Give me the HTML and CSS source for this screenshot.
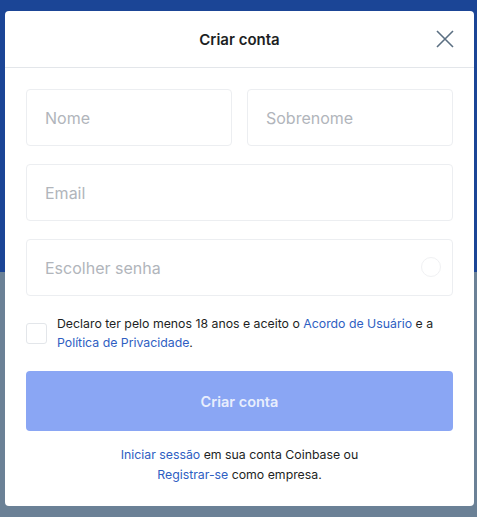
FILE: index.html
```html
<!DOCTYPE html>
<html lang="pt-BR">
<head>
    <meta charset="UTF-8">
    <meta name="viewport" content="width=device-width, initial-scale=1.0">
    <title>Criar conta</title>
    <link rel="stylesheet" href="styles.css">
</head>
<body>

<div class="backdrop">
    <div class="backdrop-top"></div>
    <div class="backdrop-bottom"></div>
</div>

<div class="modal">
    <div class="modal-header">
        <h1>Criar conta</h1>
        <button class="close" aria-label="Fechar">
            <svg width="18" height="18" viewBox="0 0 18 18">
                <path d="M1 1 L17 17 M17 1 L1 17" stroke="#5b6f82" stroke-width="1.6" fill="none"/>
            </svg>
        </button>
    </div>

    <form class="modal-body">
        <div class="row">
            <input type="text" placeholder="Nome">
            <input type="text" placeholder="Sobrenome">
        </div>
        <input type="email" placeholder="Email">
        <div class="password">
            <input type="password" placeholder="Escolher senha">
            <span class="strength"></span>
        </div>

        <label class="terms">
            <span class="checkbox"></span>
            <span>Declaro ter pelo menos 18 anos e aceito o <a href="#">Acordo de Usuário</a> e a <a href="#">Política de Privacidade</a>.</span>
        </label>

        <button type="button" class="submit">Criar conta</button>

        <p class="footer-links">
            <a href="#">Iniciar sessão</a> em sua conta Coinbase ou<br>
            <a href="#">Registrar-se</a> como empresa.
        </p>
    </form>
</div>

</body>
</html>
```

FILE: styles.css
```css
html, body {
    margin: 0;
    height: 100%;
}
body {
    font-family: "Inter", "Roboto", sans-serif;
    position: relative;
    overflow: hidden;
}
.backdrop {
    position: absolute;
    inset: 0;
    display: flex;
    flex-direction: column;
}
.backdrop-top {
    height: 272px;
    background: #1b4596;
}
.backdrop-bottom {
    flex: 1;
    background: #6b8196;
}
.modal {
    position: absolute;
    left: 5px;
    top: 11px;
    width: 469px;
    height: 495px;
    background: #fff;
    border-radius: 4px;
    box-sizing: border-box;
}
.modal-header {
    height: 56px;
    border-bottom: 1px solid #e3e6ea;
    display: flex;
    align-items: center;
    justify-content: center;
    position: relative;
}
.modal-header h1 {
    margin: 0;
    font-size: 15px;
    font-weight: 600;
    color: #1d1f24;
}
.close {
    position: absolute;
    right: 20px;
    top: 19px;
    background: none;
    border: none;
    padding: 0;
    width: 18px;
    height: 18px;
    cursor: pointer;
}
.modal-body {
    padding: 21px 21px 0;
    display: flex;
    flex-direction: column;
    gap: 18px;
}
.row {
    display: flex;
    gap: 15px;
}
input {
    width: 100%;
    height: 57px;
    box-sizing: border-box;
    border: 1px solid #eceef1;
    border-radius: 4px;
    padding: 0 18px;
    font-family: inherit;
    font-size: 16px;
    color: #1d1f24;
    outline: none;
}
input::placeholder {
    color: #b1b5bb;
}
.password {
    position: relative;
}
.strength {
    position: absolute;
    right: 12px;
    top: 18px;
    width: 18px;
    height: 18px;
    border: 1px solid #f0f1f3;
    border-radius: 50%;
}
.terms {
    display: flex;
    align-items: center;
    gap: 10px;
    font-size: 12.3px;
    line-height: 19px;
    color: #1d1f24;
}
.checkbox {
    flex: none;
    width: 19px;
    height: 19px;
    border: 1px solid #e3e6ea;
    border-radius: 3px;
}
a {
    color: #2e5ec2;
    text-decoration: none;
}
.submit {
    height: 60px;
    border: none;
    border-radius: 4px;
    background: #8aa6f4;
    color: #e8eefd;
    font-family: inherit;
    font-size: 14.5px;
    font-weight: 600;
    margin-top: 1px;
}
.footer-links {
    margin: -4px 0 0;
    text-align: center;
    font-size: 12.3px;
    line-height: 20px;
    color: #1d1f24;
}
```
